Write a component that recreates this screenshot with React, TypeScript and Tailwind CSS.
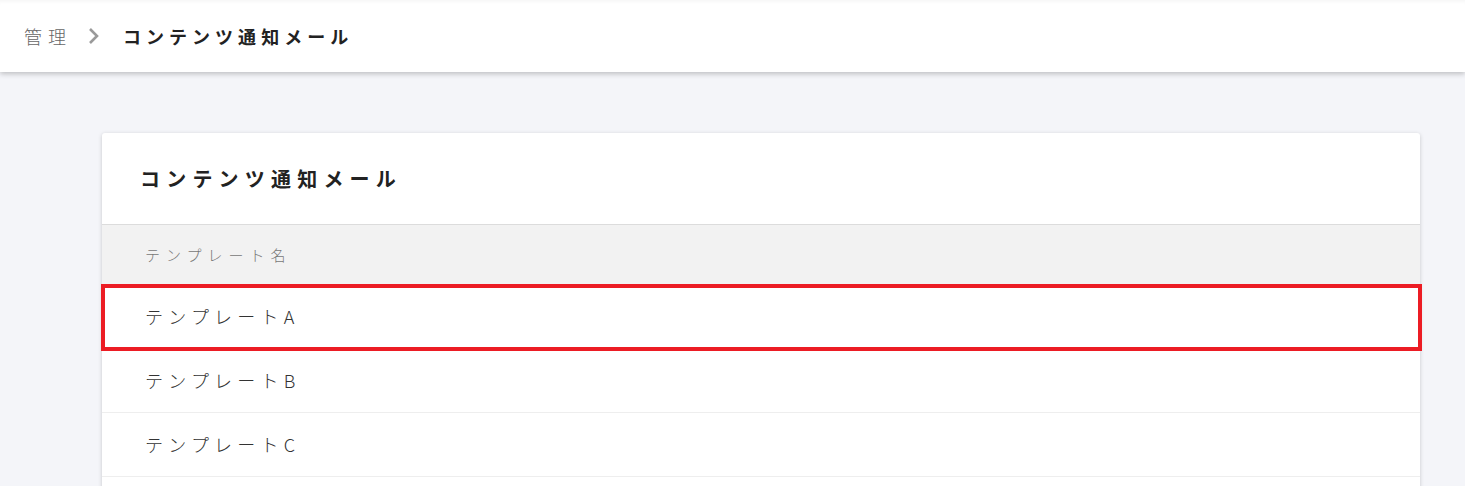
import React from "react";

const font = { fontFamily: '"Noto Sans CJK JP", "Noto Sans", sans-serif' };

export default function App() {
  const rows = ["テンプレートA", "テンプレートB", "テンプレートC"];
  return (
    <div className="h-[486px] overflow-hidden bg-[#f4f5f9]" style={font}>
      <header className="h-[72px] bg-white flex items-center pl-6 shadow-[0_2px_5px_rgba(0,0,0,0.22),inset_0_4px_4px_-3px_rgba(0,0,0,0.05)] relative z-10">
        <span className="text-[18px] font-light text-[#666] tracking-[0.33em]">管理</span>
        <svg className="ml-[16px] mr-[23px]" width="12" height="18" viewBox="0 0 12 18">
          <path d="M2 2 L9 9 L2 16" fill="none" stroke="#9a9a9a" strokeWidth="2.6" />
        </svg>
        <span className="text-[18px] font-bold text-[#222] tracking-[0.28em]">コンテンツ通知メール</span>
      </header>
      <main className="pt-[61px] pl-[102px] pr-[45px]">
        <div className="bg-white rounded-[3px] shadow-[0_1px_4px_rgba(0,0,0,0.18)] relative pb-[40px]">
          <div className="h-[92px] flex items-center pl-[38px] border-b border-[#dcdcdc]">
            <h1 className="text-[20px] font-bold text-[#222] tracking-[0.31em]">コンテンツ通知メール</h1>
          </div>
          <div className="h-[60px] bg-[#f2f2f2] flex items-center pl-[43px]">
            <span className="text-[15px] font-light text-[#777] tracking-[0.4em]">テンプレート名</span>
          </div>
          {rows.map((r, i) => (
            <div key={r} className="h-[64px] flex items-center pl-[43px] border-b border-[#eeeeee] relative">
              <span className="text-[18px] font-light text-[#333] tracking-[0.29em]">{r}</span>
              {i === 0 && (
                <div className="absolute left-[-1px] right-[-2px] top-[-1px] bottom-[-3px] border-4 border-[#ec1c24] pointer-events-none" />
              )}
            </div>
          ))}
        </div>
      </main>
    </div>
  );
}
